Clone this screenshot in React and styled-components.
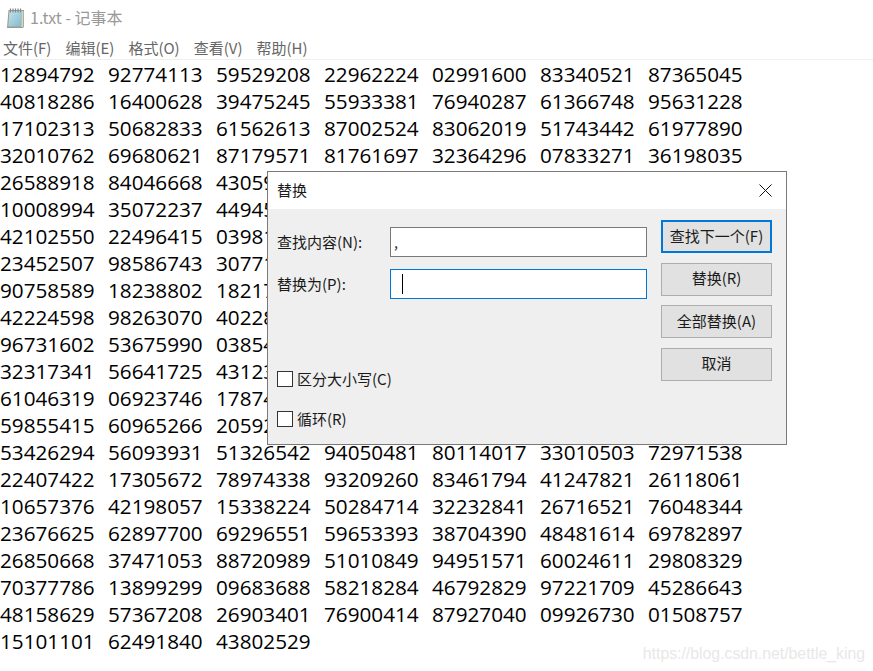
import React from "react";
import styled, { createGlobalStyle } from "styled-components";

const rows = [
  "12894792 92774113 59529208 22962224 02991600 83340521 87365045",
  "40818286 16400628 39475245 55933381 76940287 61366748 95631228",
  "17102313 50682833 61562613 87002524 83062019 51743442 61977890",
  "32010762 69680621 87179571 81761697 32364296 07833271 36198035",
  "26588918 84046668 43059127",
  "10008994 35072237 44945063",
  "42102550 22496415 03981726",
  "23452507 98586743 30771854",
  "90758589 18238802 18217460",
  "42224598 98263070 40228315",
  "96731602 53675990 03854271",
  "32317341 56641725 43123096",
  "61046319 06923746 17874502",
  "59855415 60965266 20592738",
  "53426294 56093931 51326542 94050481 80114017 33010503 72971538",
  "22407422 17305672 78974338 93209260 83461794 41247821 26118061",
  "10657376 42198057 15338224 50284714 32232841 26716521 76048344",
  "23676625 62897700 69296551 59653393 38704390 48481614 69782897",
  "26850668 37471053 88720989 51010849 94951571 60024611 29808329",
  "70377786 13899299 09683688 58218284 46792829 97221709 45286643",
  "48158629 57367208 26903401 76900414 87927040 09926730 01508757",
  "15101101 62491840 43802529",
];

const menus = ["文件(F)", "编辑(E)", "格式(O)", "查看(V)", "帮助(H)"];

const NotepadIcon = () => (
  <svg width="20" height="22" viewBox="0 0 20 22">
    <defs>
      <linearGradient id="sheet" x1="0" y1="0" x2="1" y2="1">
        <stop offset="0" stopColor="#c4e4ec" />
        <stop offset="1" stopColor="#7fb9cc" />
      </linearGradient>
    </defs>
    <path d="M2.5 3h15.5v16.5l-1 1.5H1z" fill="#9a9c92" />
    <path d="M3.5 4h12.5l-.6 15.5H2.2z" fill="url(#sheet)" />
    <path d="M16 4h1.4l-.2 16H15.4z" fill="#dcd6ba" />
    <path d="M4.5 1.5v4M7 1.5v4M9.5 1.5v4M12 1.5v4M14.5 1.5v4" stroke="#83878a" strokeWidth="1.2" />
  </svg>
);

const CloseIcon = () => (
  <svg width="13" height="13" viewBox="0 0 13 13">
    <path d="M0.5 0.5L12.5 12.5M12.5 0.5L0.5 12.5" stroke="#111" strokeWidth="1" fill="none" />
  </svg>
);

export default function App() {
  return (
    <Page>
      <GlobalStyle />
      <TitleBar>
        <NotepadIcon />
        <TitleText>1.txt - 记事本</TitleText>
      </TitleBar>
      <MenuBar>
        {menus.map((m) => (
          <MenuItem key={m}>{m}</MenuItem>
        ))}
      </MenuBar>
      <Editor>
        {rows.map((row) => (
          <Row key={row}>
            {row.split(" ").map((n, i) => (
              <span key={i}>{n}</span>
            ))}
          </Row>
        ))}
      </Editor>

      <Dialog>
        <DialogHead>
          <DialogTitle>替换</DialogTitle>
          <CloseIcon />
        </DialogHead>
        <DialogBody>
          <Fields>
            <FieldRow>
              <FieldLabel>查找内容(N):</FieldLabel>
              <Input>,</Input>
            </FieldRow>
            <FieldRow>
              <FieldLabel>替换为(P):</FieldLabel>
              <Input $focused>
                <Caret />
              </Input>
            </FieldRow>
            <Options>
              <CheckRow>
                <CheckBox />
                区分大小写(C)
              </CheckRow>
              <CheckRow>
                <CheckBox />
                循环(R)
              </CheckRow>
            </Options>
          </Fields>
          <Buttons>
            <Button $primary>查找下一个(F)</Button>
            <Button>替换(R)</Button>
            <Button>全部替换(A)</Button>
            <Button>取消</Button>
          </Buttons>
        </DialogBody>
      </Dialog>

      <Watermark>https://blog.csdn.net/bettle_king</Watermark>
    </Page>
  );
}

const GlobalStyle = createGlobalStyle`
  html, body {
    margin: 0;
    padding: 0;
    background: #fff;
  }
`;

const Page = styled.div`
  position: relative;
  width: 873px;
  height: 671px;
  overflow: hidden;
  background: #fff;
  font-family: "Noto Sans CJK SC", "Open Sans", sans-serif;
`;

const TitleBar = styled.div`
  height: 36px;
  display: flex;
  align-items: center;
  gap: 4px;
  padding-left: 6px;
`;

const TitleText = styled.div`
  font-size: 16px;
  color: #999;
  margin-top: -2px;
`;

const MenuBar = styled.div`
  height: 24px;
  display: flex;
  gap: 14px;
  padding-left: 3px;
  align-items: center;
  box-sizing: border-box;
  border-bottom: 1px solid #f0f0f0;
`;

const MenuItem = styled.div`
  font-size: 15px;
  color: #666;
`;

const Editor = styled.div`
  padding-top: 1px;
  font-family: "Open Sans", "Noto Sans", sans-serif;
  font-size: 20.7px;
  color: #000;
`;

const Row = styled.div`
  display: grid;
  grid-template-columns: repeat(7, 108px);
  height: 27px;
  line-height: 27px;
`;

const Dialog = styled.div`
  position: absolute;
  left: 267px;
  top: 171px;
  width: 520px;
  height: 274px;
  box-sizing: border-box;
  border: 1px solid #7a7a7a;
  display: flex;
  flex-direction: column;
  background: #efefef;
  font-size: 15px;
  line-height: 20px;
  color: #1a1a1a;
`;

const DialogHead = styled.div`
  height: 37px;
  flex: none;
  background: #fff;
  display: flex;
  align-items: center;
  justify-content: space-between;
  padding: 0 14px 0 9px;
`;

const DialogTitle = styled.div`
  font-size: 15px;
  margin-top: -2px;
`;

const DialogBody = styled.div`
  flex: 1;
  display: flex;
  justify-content: space-between;
  padding: 11px 14px 0 9px;
`;

const Fields = styled.div`
  width: 370px;
  padding-top: 7px;
  display: flex;
  flex-direction: column;
  gap: 12px;
`;

const FieldRow = styled.div`
  display: flex;
  align-items: center;
  justify-content: space-between;
`;

const FieldLabel = styled.div`
  font-size: 15px;
  margin-top: -1px;
`;

const Input = styled.div`
  width: 257px;
  height: 30px;
  box-sizing: border-box;
  background: #fff;
  border: 1px solid ${(p) => (p.$focused ? "#0078d7" : "#7a7a7a")};
  padding-left: 3px;
  display: flex;
  align-items: center;
  font-size: 14px;
`;

const Caret = styled.div`
  width: 1px;
  height: 20px;
  margin-left: 8px;
  background: #000;
`;

const Options = styled.div`
  margin-top: 60px;
  display: flex;
  flex-direction: column;
  gap: 24px;
`;

const CheckRow = styled.label`
  display: flex;
  align-items: center;
  gap: 4px;
  height: 16px;
  font-size: 15px;
`;

const CheckBox = styled.span`
  width: 16px;
  height: 16px;
  box-sizing: border-box;
  background: #fff;
  border: 1px solid #333;
`;

const Buttons = styled.div`
  width: 111px;
  display: flex;
  flex-direction: column;
  gap: 9.6px;
`;

const Button = styled.div`
  height: 33px;
  box-sizing: border-box;
  display: flex;
  align-items: center;
  justify-content: center;
  padding-bottom: 2px;
  background: #e1e1e1;
  border: ${(p) => (p.$primary ? "2px solid #0078d7" : "1px solid #adadad")};
  font-size: 15px;
`;

const Watermark = styled.div`
  position: absolute;
  right: 8px;
  top: 645px;
  font-family: "Liberation Sans", sans-serif;
  font-size: 15.8px;
  color: #e8e8e8;
`;
